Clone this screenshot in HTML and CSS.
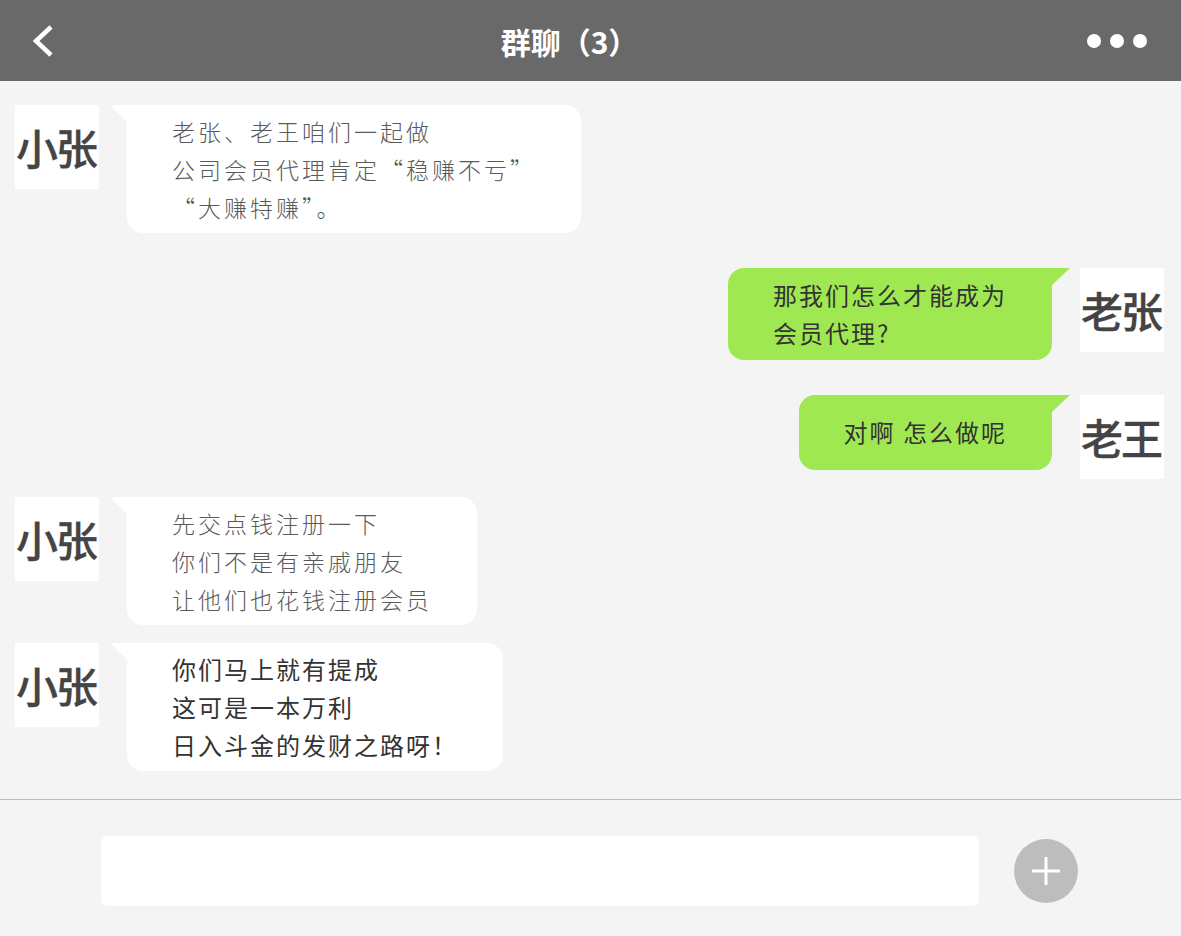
FILE: index.html
```html
<!DOCTYPE html>
<html lang="zh-CN">
<head>
    <meta charset="UTF-8">
    <meta name="viewport" content="width=device-width, initial-scale=1.0">
    <title>群聊（3）</title>
    <link rel="stylesheet" href="styles.css">
</head>
<body>
    <div class="app">
        <header class="topbar">
            <a class="back" href="#">
                <svg width="26" height="34" viewBox="0 0 26 34">
                    <polyline points="21,3 6,17 21,31" fill="none" stroke="#fff" stroke-width="4.5" stroke-linecap="butt" stroke-linejoin="miter"/>
                </svg>
            </a>
            <h1 class="title">群聊（3）</h1>
            <div class="more">
                <span class="dot"></span>
                <span class="dot"></span>
                <span class="dot"></span>
            </div>
        </header>

        <main class="chat">
            <div class="row spaced">
                <div class="avatar">小张</div>
                <div class="bubble light">老张、老王咱们一起做<br>公司会员代理肯定“稳赚不亏”<br>“大赚特赚”。</div>
            </div>

            <div class="row mine spaced">
                <div class="bubble green">那我们怎么才能成为<br>会员代理?</div>
                <div class="avatar">老张</div>
            </div>

            <div class="row mine">
                <div class="bubble green single">对啊 怎么做呢</div>
                <div class="avatar">老王</div>
            </div>

            <div class="row">
                <div class="avatar">小张</div>
                <div class="bubble light">先交点钱注册一下<br>你们不是有亲戚朋友<br>让他们也花钱注册会员</div>
            </div>

            <div class="row">
                <div class="avatar">小张</div>
                <div class="bubble">你们马上就有提成<br>这可是一本万利<br>日入斗金的发财之路呀！</div>
            </div>
        </main>

        <footer class="composer">
            <input class="input" type="text">
            <button class="add">
                <svg width="30" height="30" viewBox="0 0 30 30">
                    <path d="M15 1 V29 M1 15 H29" stroke="#fff" stroke-width="3"/>
                </svg>
            </button>
        </footer>
    </div>
</body>
</html>
```

FILE: styles.css
```css
* {
    box-sizing: border-box;
}

body {
    margin: 0;
    padding: 0;
    background-color: #f4f4f4;
    font-family: "Noto Sans CJK SC", "Noto Sans", sans-serif;
}

.app {
    display: flex;
    flex-direction: column;
    height: 936px;
}

.topbar {
    height: 81px;
    flex-shrink: 0;
    background-color: #696969;
    display: flex;
    align-items: center;
    padding: 0 34px 0 30px;
}

.back {
    display: flex;
    width: 30px;
}

.title {
    flex: 1;
    margin: 0;
    padding-right: 8px;
    text-align: center;
    color: #fff;
    font-size: 30px;
    font-weight: bold;
    letter-spacing: 0;
}

.more {
    display: flex;
    gap: 9px;
    width: 60px;
}

.dot {
    width: 14px;
    height: 14px;
    border-radius: 50%;
    background: #fff;
}

.chat {
    flex: 1;
    padding: 24px 17px 0 15px;
}

.row {
    display: flex;
    align-items: flex-start;
    gap: 28px;
    margin-bottom: 18px;
}

.row.spaced {
    margin-bottom: 35px;
}

.row.mine {
    justify-content: flex-end;
}

.avatar {
    width: 84px;
    height: 84px;
    flex-shrink: 0;
    background: #fff;
    color: #444;
    font-size: 42px;
    font-weight: 500;
    line-height: 84px;
    text-align: center;
    letter-spacing: -2px;
    text-indent: -2px;
    -webkit-text-stroke: 0.3px #444;
}

.bubble {
    position: relative;
    background: #fff;
    padding: 7px 45px;
    border-radius: 0 16px 16px 16px;
    font-size: 24px;
    line-height: 38px;
    letter-spacing: 2px;
    color: #333;
    white-space: nowrap;
}

.bubble::before {
    content: "";
    position: absolute;
    top: 0;
    left: -17px;
    width: 0;
    height: 0;
    border-top: 17px solid #fff;
    border-left: 17px solid transparent;
}

.bubble.light {
    font-size: 23px;
    font-weight: 300;
    letter-spacing: 3px;
    color: #5a5a5a;
}

.bubble.green {
    background: #9fe851;
    border-radius: 16px 0 16px 16px;
    padding: 8px 45px;
}

.bubble.green::before {
    left: auto;
    right: -18px;
    border-top: 17px solid #9fe851;
    border-left: none;
    border-right: 18px solid transparent;
}

.bubble.green.single {
    padding: 18px 45px 19px;
}

.composer {
    height: 137px;
    flex-shrink: 0;
    border-top: 1px solid #bbb;
    display: flex;
    align-items: center;
    gap: 35px;
    padding: 6px 103px 0 101px;
}

.input {
    flex: 1;
    height: 70px;
    border: none;
    border-radius: 7px;
    background: #fff;
    outline: none;
}

.add {
    width: 64px;
    height: 64px;
    border: none;
    border-radius: 50%;
    background-color: #bdbdbd;
    display: flex;
    align-items: center;
    justify-content: center;
    padding: 0;
    cursor: pointer;
}
```
